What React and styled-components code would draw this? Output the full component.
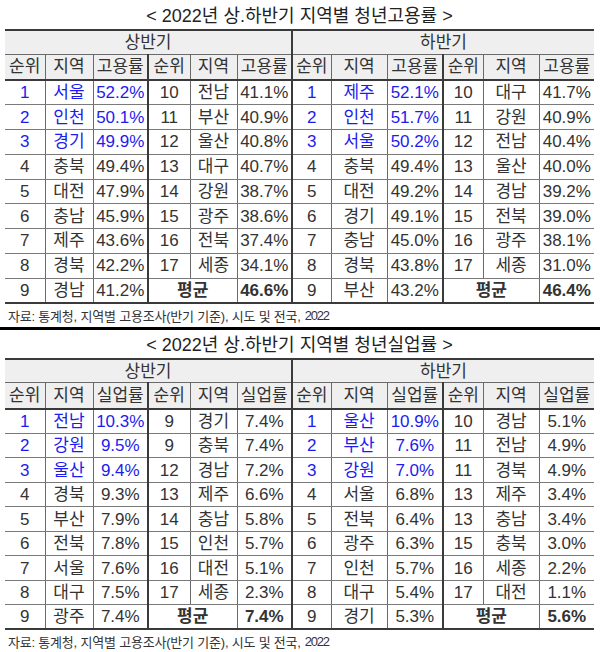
import React from 'react';
import styled, { createGlobalStyle } from 'styled-components';

const GlobalStyle = createGlobalStyle`
  body {
    margin: 0;
    background: #ffffff;
    color: #333333;
    font-family: "Liberation Sans", "Noto Sans CJK KR", sans-serif;
  }
`;

const COL_WIDTHS = [40, 48, 55, 42, 47, 55, 39, 56, 56, 40, 56, 55];
const THICK_AFTER = [2, 5, 8];

const EMPLOYMENT = {
  title: '< 2022년 상.하반기 지역별 청년고용률 >',
  label: '고용률',
  titleHeight: 29,
  rowHeight: 24.75,
  first: [
    ['1', '서울', '52.2%'], ['2', '인천', '50.1%'], ['3', '경기', '49.9%'],
    ['4', '충북', '49.4%'], ['5', '대전', '47.9%'], ['6', '충남', '45.9%'],
    ['7', '제주', '43.6%'], ['8', '경북', '42.2%'], ['9', '경남', '41.2%'],
    ['10', '전남', '41.1%'], ['11', '부산', '40.9%'], ['12', '울산', '40.8%'],
    ['13', '대구', '40.7%'], ['14', '강원', '38.7%'], ['15', '광주', '38.6%'],
    ['16', '전북', '37.4%'], ['17', '세종', '34.1%'],
  ],
  firstAvg: '46.6%',
  second: [
    ['1', '제주', '52.1%'], ['2', '인천', '51.7%'], ['3', '서울', '50.2%'],
    ['4', '충북', '49.4%'], ['5', '대전', '49.2%'], ['6', '경기', '49.1%'],
    ['7', '충남', '45.0%'], ['8', '경북', '43.8%'], ['9', '부산', '43.2%'],
    ['10', '대구', '41.7%'], ['11', '강원', '40.9%'], ['12', '전남', '40.4%'],
    ['13', '울산', '40.0%'], ['14', '경남', '39.2%'], ['15', '전북', '39.0%'],
    ['16', '광주', '38.1%'], ['17', '세종', '31.0%'],
  ],
  secondAvg: '46.4%',
};

const UNEMPLOYMENT = {
  title: '< 2022년 상.하반기 지역별 청년실업률 >',
  label: '실업률',
  titleHeight: 28,
  rowHeight: 24.5,
  first: [
    ['1', '전남', '10.3%'], ['2', '강원', '9.5%'], ['3', '울산', '9.4%'],
    ['4', '경북', '9.3%'], ['5', '부산', '7.9%'], ['6', '전북', '7.8%'],
    ['7', '서울', '7.6%'], ['8', '대구', '7.5%'], ['9', '광주', '7.4%'],
    ['9', '경기', '7.4%'], ['9', '충북', '7.4%'], ['12', '경남', '7.2%'],
    ['13', '제주', '6.6%'], ['14', '충남', '5.8%'], ['15', '인천', '5.7%'],
    ['16', '대전', '5.1%'], ['17', '세종', '2.3%'],
  ],
  firstAvg: '7.4%',
  second: [
    ['1', '울산', '10.9%'], ['2', '부산', '7.6%'], ['3', '강원', '7.0%'],
    ['4', '서울', '6.8%'], ['5', '전북', '6.4%'], ['6', '광주', '6.3%'],
    ['7', '인천', '5.7%'], ['8', '대구', '5.4%'], ['9', '경기', '5.3%'],
    ['10', '경남', '5.1%'], ['11', '전남', '4.9%'], ['11', '경북', '4.9%'],
    ['13', '제주', '3.4%'], ['13', '충남', '3.4%'], ['15', '충북', '3.0%'],
    ['16', '세종', '2.2%'], ['17', '대전', '1.1%'],
  ],
  secondAvg: '5.6%',
};

function HalfCells({ rows, avg, index, offset }) {
  const top = rows[index];
  const blue = index < 3;
  const cells = [
    <Cell key="r" $blue={blue}>{top[0]}</Cell>,
    <Cell key="g" $blue={blue}>{top[1]}</Cell>,
    <Cell key="v" $blue={blue} $thick>{top[2]}</Cell>,
  ];
  if (index < 8) {
    const low = rows[index + 9];
    cells.push(
      <Cell key="r2">{low[0]}</Cell>,
      <Cell key="g2">{low[1]}</Cell>,
      <Cell key="v2" $thick={offset === 0} $last={offset !== 0}>{low[2]}</Cell>
    );
  } else {
    cells.push(
      <Cell key="a" colSpan={2} $bold>평균</Cell>,
      <Cell key="av" $bold $thick={offset === 0} $last={offset !== 0}>{avg}</Cell>
    );
  }
  return cells;
}

function RateTable({ data }) {
  const heads = ['순위', '지역', data.label, '순위', '지역', data.label];
  return (
    <Section>
      <Title $h={data.titleHeight}>{data.title}</Title>
      <Table>
        <colgroup>
          {COL_WIDTHS.map((w, i) => <Col key={i} $w={w} />)}
        </colgroup>
        <thead>
          <GroupRow>
            <GroupHead colSpan={6} $thick>상반기</GroupHead>
            <GroupHead colSpan={6}>하반기</GroupHead>
          </GroupRow>
          <HeadRow>
            {[...heads, ...heads].map((h, i) => (
              <ColHead key={i} $thick={THICK_AFTER.includes(i)} $last={i === 11}>
                {h}
              </ColHead>
            ))}
          </HeadRow>
        </thead>
        <tbody>
          {Array.from({ length: 9 }, (_, i) => (
            <DataRow key={i} $h={data.rowHeight}>
              <HalfCells rows={data.first} avg={data.firstAvg} index={i} offset={0} />
              <HalfCells rows={data.second} avg={data.secondAvg} index={i} offset={6} />
            </DataRow>
          ))}
        </tbody>
      </Table>
      <Source>
        자료: 통계청, 지역별 고용조사(반기 기준), 시도 및 전국, <Year>2022</Year>
      </Source>
    </Section>
  );
}

export default function App() {
  return (
    <Page>
      <GlobalStyle />
      <RateTable data={EMPLOYMENT} />
      <Divider />
      <RateTable data={UNEMPLOYMENT} />
    </Page>
  );
}

const Page = styled.div`
  width: 600px;
  display: flex;
  flex-direction: column;
`;

const Section = styled.section`
  display: flex;
  flex-direction: column;
  padding: 0 6px 0 5px;
`;

const Title = styled.h2`
  margin: 0;
  height: ${(p) => p.$h}px;
  padding-bottom: 2px;
  box-sizing: border-box;
  display: flex;
  align-items: center;
  justify-content: center;
  font-size: 18px;
  font-weight: 400;
  color: #222222;
`;

const Table = styled.table`
  width: 589px;
  table-layout: fixed;
  border-collapse: collapse;
  border-top: 2px solid #3a3a3a;
  border-bottom: 2px solid #3a3a3a;
  font-size: 17px;
`;

const Col = styled.col`
  width: ${(p) => p.$w}px;
`;

const GroupRow = styled.tr`
  height: 24px;
  background: #efefef;
`;

const HeadRow = styled.tr`
  height: 26px;
  background: #efefef;
`;

const DataRow = styled.tr`
  height: ${(p) => p.$h}px;
`;

const cellBase = `
  padding: 0;
  text-align: center;
  vertical-align: middle;
  white-space: nowrap;
  line-height: 1;
`;

const GroupHead = styled.th`
  ${cellBase}
  font-weight: 400;
  color: #333333;
  border-bottom: 1px solid #6a6a6a;
  border-right: ${(p) => (p.$thick ? '2px solid #3a3a3a' : 'none')};
`;

const ColHead = styled.th`
  ${cellBase}
  font-weight: 400;
  color: #333333;
  border-bottom: 2px solid #3a3a3a;
  border-right: ${(p) =>
    p.$last ? 'none' : p.$thick ? '2px solid #3a3a3a' : '1px solid #6a6a6a'};
`;

const Cell = styled.td`
  ${cellBase}
  color: ${(p) => (p.$blue ? '#1c1ced' : '#333333')};
  font-weight: ${(p) => (p.$bold ? 700 : 400)};
  border-bottom: 1px solid #7a7a7a;
  border-right: ${(p) =>
    p.$last ? 'none' : p.$thick ? '2px solid #3a3a3a' : '1px solid #6a6a6a'};
`;

const Source = styled.p`
  margin: 0;
  height: 23px;
  box-sizing: border-box;
  display: flex;
  align-items: center;
  padding-left: 3px;
  font-size: 13px;
  color: #333333;
  letter-spacing: -0.2px;
`;

const Year = styled.span`
  margin-left: 4px;
  letter-spacing: -1.2px;
`;

const Divider = styled.hr`
  margin: 0;
  border: none;
  height: 3px;
  background: #000000;
`;
